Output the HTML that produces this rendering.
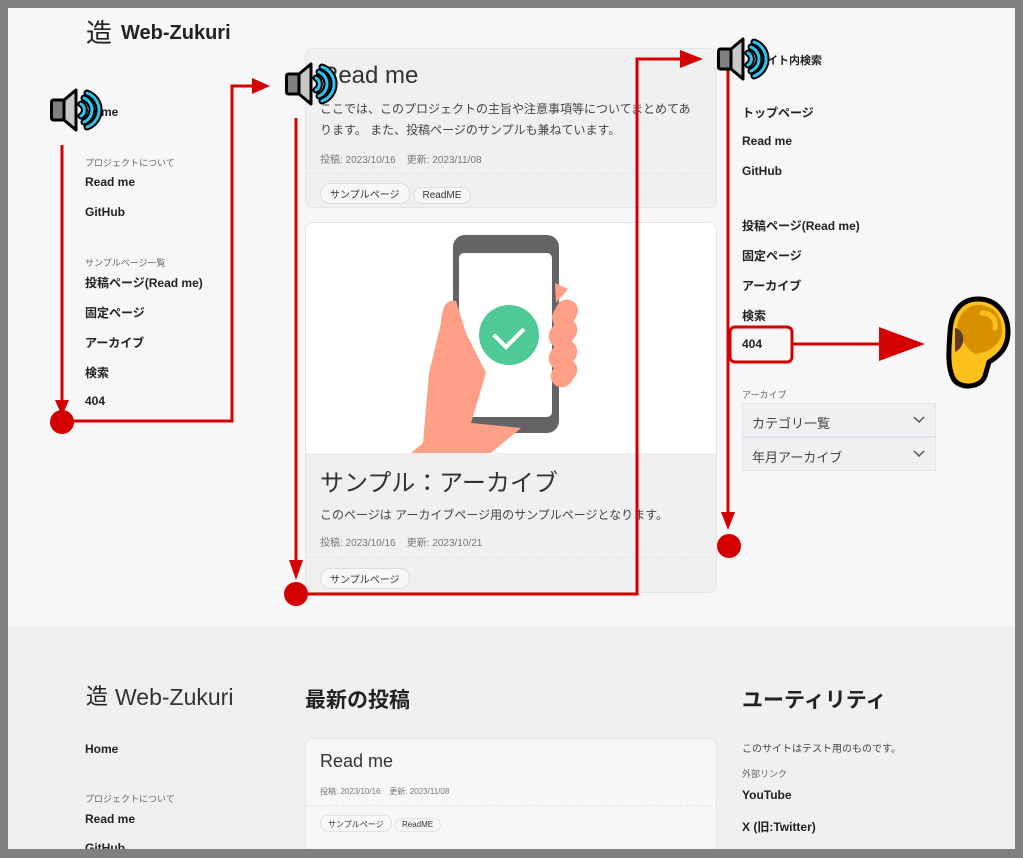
<!DOCTYPE html>
<html><head><meta charset="utf-8">
<style>
*{margin:0;padding:0;box-sizing:border-box}
body{width:1023px;height:858px;overflow:hidden;background:#808080;font-family:"Liberation Sans","Noto Sans CJK JP",sans-serif;color:#222;position:relative}
.page{position:absolute;left:8px;top:8px;width:1007px;height:841px;background:#f7f7f9;overflow:hidden}
.foot{position:absolute;left:0;top:618px;width:1007px;height:240px;background:#f0f0f3}
.a{position:absolute;white-space:nowrap}
.b{font-weight:bold;font-size:12px;color:#222}
.s{font-size:9px;color:#666}
.card{position:absolute;border:1px solid #e4e4e8;border-radius:8px;background:#f0f0f3;overflow:hidden}
.tag{display:inline-block;border:1px solid #ddd;border-radius:10px;font-size:10px;padding:2px 9px;color:#333;background:#f7f7f9;margin-right:3px}
.sel{position:absolute;left:734px;width:194px;height:34px;background:#f0f0f3;border:1px solid #e4e4e8;font-size:13px;color:#444;padding:9px 9px}
.sel svg{position:absolute;right:10px;top:12px}
</style></head><body>
<div class="page">
<div class="foot"></div>
<div class="a" style="left:78px;top:10px;font-size:26px;line-height:30px">造</div>
<div class="a" style="left:113px;top:14px;font-size:20px;font-weight:bold">Web-Zukuri</div>
<div class="a b" style="left:77px;top:97px">Home</div>
<div class="a s" style="left:77px;top:148px">プロジェクトについて</div>
<div class="a b" style="left:77px;top:167px">Read me</div>
<div class="a b" style="left:77px;top:197px">GitHub</div>
<div class="a s" style="left:77px;top:248px">サンプルページ一覧</div>
<div class="a b" style="left:77px;top:266px">投稿ページ(Read me)</div>
<div class="a b" style="left:77px;top:296px">固定ページ</div>
<div class="a b" style="left:77px;top:326px">アーカイブ</div>
<div class="a b" style="left:77px;top:356px">検索</div>
<div class="a b" style="left:77px;top:386px">404</div>
<div class="card" style="left:297px;top:40px;width:412px;height:160px">
 <div class="a" style="left:15px;top:13px;font-size:24px;color:#333">Read me</div>
 <div class="a" style="left:14px;top:50px;font-size:12px;color:#444;line-height:21px;white-space:normal;width:380px">ここでは、このプロジェクトの主旨や注意事項等についてまとめてあります。 また、投稿ページのサンプルも兼ねています。</div>
 <div class="a" style="left:14px;top:102px;font-size:10px;color:#777">投稿: 2023/10/16 &nbsp;&nbsp; 更新: 2023/11/08</div>
 <div class="a" style="left:0;top:124px;width:412px;border-top:1px dashed #e2e2e6"></div>
 <div class="a" style="left:14px;top:134px"><span class="tag">サンプルページ</span><span class="tag">ReadME</span></div>
</div>
<div class="card" style="left:297px;top:214px;width:412px;height:371px">
 <div class="a" style="left:0;top:0;width:412px;height:230px;background:#fff;overflow:hidden">
  <svg width="412" height="230" viewBox="0 0 412 230">
   <rect x="147" y="12" width="106" height="198" rx="12" fill="#646466"/>
   <rect x="153" y="30" width="93" height="164" rx="5" fill="#fff"/>
   <circle cx="203" cy="112" r="30" fill="#4fc995"/>
   <path d="M188 112 L200 124 L218 106" stroke="#fff" stroke-width="4" fill="none"/>
   <path d="M150 78 C140 76 136 84 135 100 L123 150 L117 220 L105 230 L185 230 L215 205 L165 200 L180 150 L160 110 Z" fill="#fea088"/>
   <rect x="244" y="80" width="30" height="22" rx="11" fill="#fea088" transform="rotate(-60 259 91)"/>
   <rect x="241" y="98" width="32" height="24" rx="12" fill="#fea088" transform="rotate(-55 257 110)"/>
   <rect x="241" y="120" width="32" height="24" rx="12" fill="#fea088" transform="rotate(-55 257 132)"/>
   <rect x="243" y="139" width="30" height="22" rx="11" fill="#fea088" transform="rotate(-55 258 150)"/>
   <path d="M249 60 L262 66 L250 80Z" fill="#fea088"/>
  </svg>
 </div>
 <div class="a" style="left:14px;top:240px;font-size:24px;color:#333">サンプル：アーカイブ</div>
 <div class="a" style="left:14px;top:283px;font-size:12px;color:#444">このページは アーカイブページ用のサンプルページとなります。</div>
 <div class="a" style="left:14px;top:311px;font-size:10px;color:#777">投稿: 2023/10/16 &nbsp;&nbsp; 更新: 2023/10/21</div>
 <div class="a" style="left:0;top:334px;width:412px;border-top:1px dashed #e2e2e6"></div>
 <div class="a" style="left:14px;top:345px"><span class="tag">サンプルページ</span></div>
</div>
<div class="a b" style="left:748px;top:44px;font-size:11px">サイト内検索</div>
<div class="a b" style="left:734px;top:96px">トップページ</div>
<div class="a b" style="left:734px;top:126px">Read me</div>
<div class="a b" style="left:734px;top:156px">GitHub</div>
<div class="a b" style="left:734px;top:209px">投稿ページ(Read me)</div>
<div class="a b" style="left:734px;top:239px">固定ページ</div>
<div class="a b" style="left:734px;top:269px">アーカイブ</div>
<div class="a b" style="left:734px;top:299px">検索</div>
<div class="a b" style="left:734px;top:329px">404</div>
<div class="a s" style="left:734px;top:380px">アーカイブ</div>
<div class="sel" style="top:395px">カテゴリ一覧<svg width="12" height="8" viewBox="0 0 12 8"><path d="M1 1 L6 6 L11 1" stroke="#555" stroke-width="1.5" fill="none"/></svg></div>
<div class="sel" style="top:429px">年月アーカイブ<svg width="12" height="8" viewBox="0 0 12 8"><path d="M1 1 L6 6 L11 1" stroke="#555" stroke-width="1.5" fill="none"/></svg></div>
<div class="a" style="left:78px;top:671px;font-size:22px">造</div>
<div class="a" style="left:107px;top:676px;font-size:23px;color:#333">Web-Zukuri</div>
<div class="a b" style="left:77px;top:734px">Home</div>
<div class="a s" style="left:77px;top:784px">プロジェクトについて</div>
<div class="a b" style="left:77px;top:804px">Read me</div>
<div class="a b" style="left:77px;top:833px">GitHub</div>
<div class="a" style="left:297px;top:676px;font-size:21px;font-weight:bold">最新の投稿</div>
<div class="card" style="left:297px;top:730px;width:412px;height:120px;background:#f7f7f9">
 <div class="a" style="left:14px;top:12px;font-size:18px;color:#333">Read me</div>
 <div class="a" style="left:14px;top:47px;font-size:8px;color:#777">投稿: 2023/10/16 &nbsp;&nbsp; 更新: 2023/11/08</div>
 <div class="a" style="left:0;top:66px;width:412px;border-top:1px dashed #e2e2e6"></div>
 <div class="a" style="left:14px;top:76px;transform:scale(.8);transform-origin:0 0"><span class="tag">サンプルページ</span><span class="tag">ReadME</span></div>
</div>
<div class="a" style="left:734px;top:676px;font-size:21px;font-weight:bold">ユーティリティ</div>
<div class="a" style="left:734px;top:732px;font-size:10px;color:#444">このサイトはテスト用のものです。</div>
<div class="a s" style="left:734px;top:759px">外部リンク</div>
<div class="a b" style="left:734px;top:780px">YouTube</div>
<div class="a b" style="left:734px;top:810px">X (旧:Twitter)</div>
</div>
<svg class="a" style="left:0;top:0" width="1023" height="858" viewBox="0 0 1023 858">
 <defs>
  <g id="spk">
   <rect x="1.5" y="12" width="13" height="20" rx="2" fill="#808080" stroke="#000" stroke-width="3"/>
   <path d="M14 12 L26 2 L26 42 L14 32Z" fill="#c8c8c8" stroke="#000" stroke-width="3" stroke-linejoin="round"/>
   <g fill="none" stroke="#000" stroke-width="7" stroke-linecap="round">
    <path d="M31 16 A7 7 0 0 1 31 28"/><path d="M34 10 A13 13 0 0 1 34 34"/><path d="M37 5 A18 18 0 0 1 37 39"/>
   </g>
   <g fill="none" stroke="#2ec4f0" stroke-width="3" stroke-linecap="round">
    <path d="M31 16 A7 7 0 0 1 31 28"/><path d="M34 10 A13 13 0 0 1 34 34"/><path d="M37 5 A18 18 0 0 1 37 39"/>
   </g>
  </g>
 </defs>
 <g stroke="#d40000" stroke-width="3" fill="none">
  <path d="M62 145 V405"/>
  <path d="M62 421 H232 V86 H256"/>
  <path d="M296 118 V565"/>
  <path d="M296 594 H637 V59 H685"/>
  <path d="M728 66 V515"/>
  <rect x="730" y="327" width="62" height="35" rx="5"/>
  <path d="M792 344 H880"/>
 </g>
 <g fill="#d40000">
  <path d="M55 400 L69 400 L62 416Z"/>
  <circle cx="62" cy="422" r="12"/>
  <path d="M252 78 L270 86 L252 94Z"/>
  <path d="M289 560 L303 560 L296 580Z"/>
  <circle cx="296" cy="594" r="12"/>
  <path d="M680 50 L703 59 L680 68Z"/>
  <path d="M721 512 L735 512 L728 530Z"/>
  <circle cx="729" cy="546" r="12"/>
  <path d="M879 327 L925 344 L879 361Z"/>
 </g>
 <use href="#spk" x="50" y="88"/>
 <use href="#spk" x="285" y="62"/>
 <use href="#spk" x="717" y="37"/>
 <g transform="translate(945,296)">
  <path d="M33 3 C52 3 63 18 63 36 C63 52 54 60 44 66 L40 80 C36 92 14 94 8 82 C2 70 4 52 5 36 C6 16 16 3 33 3Z" fill="#fcc21b" stroke="#000" stroke-width="5"/>
  <path d="M33 9 C48 9 57 20 57 34 C57 46 48 52 40 56 L30 58 C20 52 14 40 12 30 C14 18 22 9 33 9Z" fill="#d79100"/>
  <path d="M10 32 C20 34 22 50 10 56Z" fill="#5d3a28"/>
  <path d="M37 17 C46 17 52 24 50 32" stroke="#fcc21b" stroke-width="5" fill="none" stroke-linecap="round"/>
 </g>
</svg>
</body></html>
